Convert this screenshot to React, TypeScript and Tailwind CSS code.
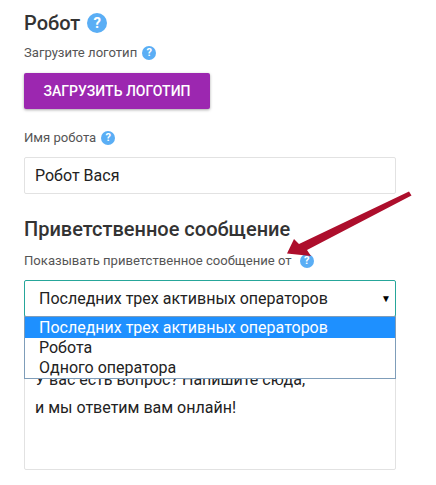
import React from 'react'

const Help = ({ size, text }: { size: string; text: string }) => (
    <span className={`inline-flex items-center justify-center rounded-full bg-[#5aaef5] text-white font-bold ${size} ${text}`}>?</span>
)

const App = () => {
    return (
        <div className="relative h-[485px] w-[436px] overflow-hidden bg-white pl-6 pr-10 font-['Roboto',sans-serif] text-[#333]">
            <div className="flex h-[24px] items-center gap-[7px] mt-[11px] text-[20px] font-medium text-[#333]">
                Робот <Help size="h-5 w-5" text="text-[15px]" />
            </div>
            <div className="mt-[9px] flex h-[18px] items-center gap-[5px] text-[13.1px] text-[#555]">
                Загрузите логотип <Help size="h-[14px] w-[14px]" text="text-[11px]" />
            </div>
            <button className="mt-[11px] block h-[36px] w-[186px] rounded-[2px] bg-[#9c27b0] text-[14px] font-medium text-white shadow-[0_1px_3px_rgba(0,0,0,0.35)]">
                ЗАГРУЗИТЬ ЛОГОТИП
            </button>
            <div className="mt-[20px] flex h-[18px] items-center gap-[5px] text-[13.1px] text-[#555]">
                Имя робота <Help size="h-[14px] w-[14px]" text="text-[11px]" />
            </div>
            <div className="mt-[10px] flex h-[37px] items-center rounded-[2px] border border-[#e2e2e2] pl-[10px] text-[16px] text-[#222]">
                Робот Вася
            </div>
            <div className="mt-[23px] h-[24px] text-[20px] font-medium leading-[24px] text-[#333]">
                Приветственное сообщение
            </div>
            <div className="mt-[11px] flex h-[18px] items-center gap-[8px] text-[13.1px] text-[#555]">
                Показывать приветственное сообщение от <Help size="h-[14px] w-[14px]" text="text-[11px]" />
            </div>
            <div className="relative mt-[10px]">
                <div className="flex h-[37px] items-center justify-between rounded-[2px] border border-[#26a69a] pl-[14px] pr-[4px] text-[16px] text-[#222]">
                    <span>Последних трех активных операторов</span>
                    <span className="-mt-[1px] text-[10px] text-black">▼</span>
                </div>
                <div className="absolute left-0 right-0 top-[36px] z-10 border border-[#7f9db9] bg-white text-[16px] leading-[20px] text-[#222]">
                    <div className="flex h-[21px] items-center bg-[#1e90ff] pl-[14px] text-white">Последних трех активных операторов</div>
                    <div className="flex h-[20px] items-center pl-[14px]">Робота</div>
                    <div className="flex h-[20px] items-center pl-[14px]">Одного оператора</div>
                </div>
                <div className="mt-[-1px] h-[154px] rounded-[2px] border border-[#e2e2e2] pl-[10px] pt-[53px] text-[16px] text-[#222]">
                    <div className="h-[20px] leading-[20px]">У вас есть вопрос? Напишите сюда,</div>
                    <div className="mt-[8px] leading-[20px]">и мы ответим вам онлайн!</div>
                </div>
            </div>
            <svg className="absolute left-[280px] top-[185px] z-20" width="140" height="80" viewBox="0 0 140 80">
                <path d="M129 6.5 L131.5 10.5 L27 65 L31 71 L7 68.5 L14 54 L19 59 Z" fill="#ad0e2c" />
            </svg>
        </div>
    )
}

export default App
